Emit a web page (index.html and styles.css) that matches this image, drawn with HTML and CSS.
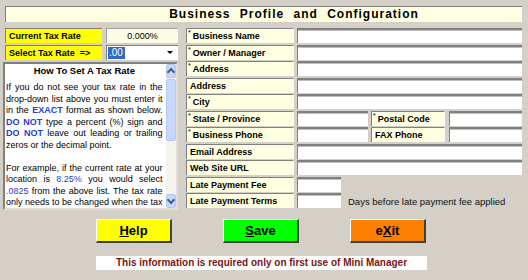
FILE: index.html
```html
<!DOCTYPE html>
<html lang="en">
<head>
    <meta charset="UTF-8">
    <title>Business Profile and Configuration</title>
    <link rel="stylesheet" href="styles.css">
</head>
<body>
    <div class="title">Business Profile and Configuration</div>

    <div class="main">
        <div class="left">
            <div class="taxrow">
                <div class="ylabel">Current Tax Rate</div>
                <div class="rate">0.000%</div>
            </div>
            <div class="taxrow">
                <div class="ylabel">Select Tax Rate&nbsp; =&gt;</div>
                <div class="select"><span class="sel">.00</span><span class="arrow"></span></div>
            </div>
            <div class="helpbox">
                <div class="helptext">
                    <div class="htitle">How To Set A Tax Rate</div>
                    <div class="jl">If you do not see your tax rate in the</div>
                    <div class="jl">drop-down list above you must enter it</div>
                    <div class="jl">in the <b class="blue">EXACT</b> format as shown below.</div>
                    <div class="jl"><b class="blue">DO NOT</b> type a percent (%) sign and</div>
                    <div class="jl"><b class="blue">DO NOT</b> leave out leading or trailing</div>
                    <div>zeros or the decimal point.</div>
                    <div>&nbsp;</div>
                    <div class="jl">For example, if the current rate at your</div>
                    <div class="jl">location is <span class="blue">8.25%</span> you would select</div>
                    <div class="jl"><span class="blue">.0825</span> from the above list. The tax rate</div>
                    <div class="jl">only needs to be changed when the tax</div>
                </div>
                <div class="scrollbar">
                    <div class="sbtn up"></div>
                    <div class="track"><div class="thumb"></div></div>
                    <div class="sbtn down"></div>
                </div>
            </div>
        </div>

        <div class="right">
            <div class="row"><div class="label"><span class="star">*</span>Business Name</div><div class="field"></div></div>
            <div class="row"><div class="label"><span class="star">*</span>Owner / Manager</div><div class="field"></div></div>
            <div class="row"><div class="label"><span class="star">*</span>Address</div><div class="field"></div></div>
            <div class="row"><div class="label">Address</div><div class="field"></div></div>
            <div class="row"><div class="label"><span class="star">*</span>City</div><div class="field"></div></div>
            <div class="row">
                <div class="label"><span class="star">*</span>State / Province</div>
                <div class="split">
                    <div class="field short"></div>
                    <div class="label small"><span class="star">*</span>Postal Code</div>
                    <div class="field"></div>
                </div>
            </div>
            <div class="row">
                <div class="label"><span class="star">*</span>Business Phone</div>
                <div class="split">
                    <div class="field short"></div>
                    <div class="label small">FAX Phone</div>
                    <div class="field"></div>
                </div>
            </div>
            <div class="row"><div class="label">Email Address</div><div class="field"></div></div>
            <div class="row"><div class="label">Web Site URL</div><div class="field"></div></div>
            <div class="row"><div class="label">Late Payment Fee</div><div class="tiny-wrap"><div class="field tiny"></div></div></div>
            <div class="row"><div class="label">Late Payment Terms</div><div class="tiny-wrap"><div class="field tiny"></div><span class="note">Days before late payment fee applied</span></div></div>
        </div>
    </div>

    <div class="buttons">
        <div class="btn help"><u>H</u>elp</div>
        <div class="btn save"><u>S</u>ave</div>
        <div class="btn exit">e<u>X</u>it</div>
    </div>
    <div class="notice">This information is required only on first use of Mini Manager</div>
</body>
</html>
```

FILE: styles.css
```css
body {
    margin: 0;
    background: #d4d0c8;
    font-family: 'Liberation Sans', Arial, sans-serif;
    color: #000;
    width: 528px;
    height: 280px;
    overflow: hidden;
}

.title {
    margin: 6px 6px 0 5px;
    height: 15px;
    line-height: 15px;
    background: #ffffe1;
    border-top: 1px solid #808080;
    border-left: 1px solid #808080;
    font-size: 12px;
    font-weight: bold;
    letter-spacing: 1px;
    word-spacing: 5px;
    text-align: center;
    padding-left: 60px;
}

.main {
    display: flex;
    gap: 8px;
    margin-top: 6px;
    padding-left: 3px;
}

.left {
    width: 175px;
    display: flex;
    flex-direction: column;
}

.taxrow {
    display: flex;
    gap: 4px;
    padding-left: 2px;
    height: 15px;
    margin-bottom: 1.5px;
}

.ylabel {
    width: 97px;
    background: #ffff00;
    border-top: 1px solid #808080;
    border-left: 1px solid #808080;
    font-size: 9px;
    font-weight: bold;
    line-height: 14px;
    padding-left: 3px;
    box-sizing: border-box;
}

.rate {
    flex: 1;
    background: #fbfbe6;
    border-top: 1px solid #a0a0a0;
    border-left: 1px solid #a0a0a0;
    font-size: 9px;
    line-height: 14px;
    text-align: center;
}

.select {
    flex: 1;
    background: #fff;
    border-top: 1px solid #808080;
    border-left: 1px solid #808080;
    display: flex;
    align-items: center;
    padding-left: 1px;
}

.sel {
    background: #316ac5;
    color: #fff;
    font-size: 10px;
    line-height: 12px;
    width: 16px;
    padding-left: 1px;
}

.arrow {
    margin-left: auto;
    margin-right: 5px;
    width: 0;
    height: 0;
    border-left: 3px solid transparent;
    border-right: 3px solid transparent;
    border-top: 3px solid #000;
}

.helpbox {
    margin-top: 0.5px;
    height: 148px;
    background: #fff;
    border-top: 2px solid #808080;
    border-left: 2px solid #808080;
    border-right: 2px solid #e0ddd6;
    border-bottom: 2px solid #e0ddd6;
    box-sizing: border-box;
    display: flex;
    overflow: hidden;
}

.helptext {
    flex: 1;
    padding: 0 3px 0 1px;
    font-size: 9px;
    line-height: 11.5px;
    white-space: nowrap;
}

.jl {
    text-align: justify;
    text-align-last: justify;
}

.htitle {
    font-weight: bold;
    text-align: center;
    font-size: 9.5px;
    margin-bottom: 6px;
    padding-top: 1px;
}

.blue {
    color: #2a3cd0;
}

.scrollbar {
    width: 14px;
    display: flex;
    flex-direction: column;
    background: #f4f3ee;
}

.sbtn {
    height: 14px;
    background: #c6d6fb;
    border: 1px solid #b4c8f6;
    box-sizing: border-box;
    border-radius: 2px;
    display: flex;
    align-items: center;
    justify-content: center;
}

.sbtn::after {
    content: "";
    width: 4px;
    height: 4px;
    border-left: 2px solid #4d6185;
    border-top: 2px solid #4d6185;
}

.up::after {
    transform: translateY(1px) rotate(45deg);
}

.down::after {
    transform: translateY(-1px) rotate(225deg);
}

.track {
    flex: 1;
    padding-top: 1px;
}

.thumb {
    height: 62px;
    background: #c8d8fc;
    border: 1px solid #b4c8f6;
    border-radius: 2px;
    box-sizing: border-box;
}

.right {
    width: 337px;
    display: grid;
    grid-auto-rows: 15px;
    row-gap: 1.5px;
}

.row {
    display: flex;
    gap: 3px;
}

.label {
    width: 108px;
    flex: none;
    background: #ffffe1;
    border-top: 1px solid #808080;
    border-left: 1px solid #808080;
    border-right: 1px solid #fff;
    box-sizing: border-box;
    font-size: 9px;
    font-weight: bold;
    line-height: 14px;
    padding-left: 3px;
    white-space: nowrap;
}

.label.small {
    width: 74px;
    margin-right: 1px;
}

.star {
    font-size: 7px;
    font-weight: normal;
    vertical-align: top;
    line-height: 8px;
    margin-left: -2px;
    margin-right: 2px;
}

.field {
    flex: 1;
    background: #fff;
    border-top: 2px solid #808080;
    border-left: 1px solid #808080;
    box-shadow: inset 0 1px 0 #c0c0c0;
    box-sizing: border-box;
    margin-right: 1px;
}

.split {
    flex: 1;
    display: flex;
    gap: 3px;
}

.field.short {
    flex: none;
    width: 71px;
    margin-right: 0;
}

.tiny-wrap {
    flex: 1;
    display: flex;
    align-items: stretch;
}

.field.tiny {
    flex: none;
    width: 44px;
}

.note {
    font-size: 9.5px;
    line-height: 15px;
    margin-left: 6px;
    padding-top: 1px;
    color: #101010;
}

.buttons {
    display: flex;
    justify-content: space-between;
    width: 330px;
    margin: 9px 0 0 96px;
}

.btn {
    width: 76px;
    height: 24px;
    box-sizing: border-box;
    border-top: 1px solid #fff;
    border-left: 1px solid #fff;
    border-right: 2px solid #404040;
    border-bottom: 2px solid #404040;
    font-size: 13px;
    font-weight: bold;
    line-height: 21px;
    text-align: center;
}

.help {
    background: #ffff00;
}

.save {
    background: #00ff00;
}

.exit {
    background: #ff8000;
}

.notice {
    width: 331px;
    height: 14px;
    margin: 13px 0 0 96px;
    background: #fff;
    color: #7a1414;
    font-size: 10px;
    font-weight: bold;
    line-height: 14px;
    text-align: center;
}
```
